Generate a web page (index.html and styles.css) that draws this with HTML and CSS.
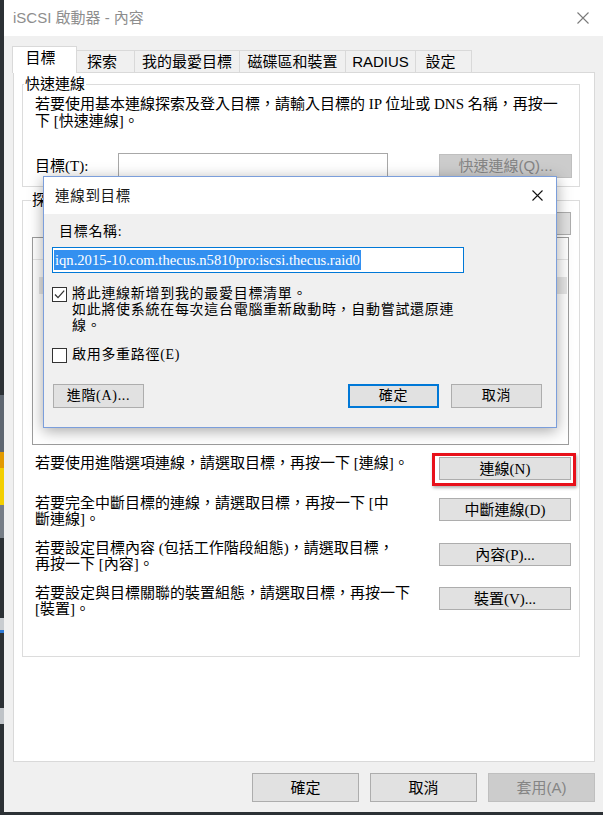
FILE: index.html
```html
<!DOCTYPE html>
<html lang="zh-Hant">
<head>
<meta charset="utf-8">
<title>iSCSI 啟動器 - 內容</title>
<link rel="stylesheet" href="styles.css">
</head>
<body>
<div class="window">
  <div class="titlebar">
    <span class="title">iSCSI 啟動器 - 內容</span>
    <svg class="close" width="12" height="12" viewBox="0 0 12 12"><path d="M0.5 0.5L11.5 11.5M11.5 0.5L0.5 11.5" stroke="#7a7a7a" stroke-width="1.1" fill="none"/></svg>
  </div>
  <div class="client">
    <div class="tabs">
      <div class="tab active">目標</div>
      <div class="tab t2">探索</div>
      <div class="tab t3">我的最愛目標</div>
      <div class="tab t4">磁碟區和裝置</div>
      <div class="tab t5">RADIUS</div>
      <div class="tab t6">設定</div>
    </div>
    <div class="panel">
      <fieldset class="group g-quick">
        <legend>快速連線</legend>
        <p class="desc">若要使用基本連線探索及登入目標，請輸入目標的 IP 位址或 DNS 名稱，再按一<br>下 [快速連線]。</p>
        <div class="quick-row">
          <span class="q-label">目標(T):</span>
          <div class="textbox"></div>
          <button class="btn btn-quick disabled">快速連線(Q)...</button>
        </div>
      </fieldset>
      <fieldset class="group g-disc">
        <legend>探索到的目標(G)</legend>
        <div class="refresh-row"><button class="btn btn-row">重新整理(R)</button></div>
        <div class="listview">
          <div class="lv-head"><span class="lv-col1"></span><span class="lv-col2"></span></div>
          <div class="lv-item"></div>
          <div class="lv-item lv-sel"></div>
        </div>
        <div class="action r1">
          <p class="action-text">若要使用進階選項連線，請選取目標，再按一下 [連線]。</p>
          <button class="btn btn-row highlight">連線(N)</button>
        </div>
        <div class="action r2">
          <p class="action-text">若要完全中斷目標的連線，請選取目標，再按一下 [中<br>斷連線]。</p>
          <button class="btn btn-row">中斷連線(D)</button>
        </div>
        <div class="action r3">
          <p class="action-text">若要設定目標內容 (包括工作階段組態)，請選取目標，<br>再按一下 [內容]。</p>
          <button class="btn btn-row">內容(P)...</button>
        </div>
        <div class="action r4">
          <p class="action-text">若要設定與目標關聯的裝置組態，請選取目標，再按一下<br>[裝置]。</p>
          <button class="btn btn-row">裝置(V)...</button>
        </div>
      </fieldset>
    </div>
    <div class="footer">
      <button class="btn btn-foot">確定</button>
      <button class="btn btn-foot">取消</button>
      <button class="btn btn-foot disabled">套用(A)</button>
    </div>
  </div>

  <div class="dialog">
    <div class="dlg-title">
      <span class="dlg-caption">連線到目標</span>
      <svg width="11" height="11" viewBox="0 0 11 11"><path d="M0.5 0.5L10.5 10.5M10.5 0.5L0.5 10.5" stroke="#111" stroke-width="1.1" fill="none"/></svg>
    </div>
    <div class="dlg-body">
      <div class="dlg-label">目標名稱:</div>
      <div class="dlg-input"><span class="sel">iqn.2015-10.com.thecus.n5810pro:iscsi.thecus.raid0</span></div>
      <div class="check c1">
        <span class="box"><svg width="13" height="13" viewBox="0 0 13 13"><path d="M2 6.5L5 9.6L11.2 2.6" stroke="#333" stroke-width="1.3" fill="none"/></svg></span>
        <span class="check-text">將此連線新增到我的最愛目標清單。<br>如此將使系統在每次這台電腦重新啟動時，自動嘗試還原連<br>線。</span>
      </div>
      <div class="check c2">
        <span class="box"></span>
        <span class="check-text">啟用多重路徑(E)</span>
      </div>
      <div class="dlg-buttons">
        <button class="btn btn-dlg adv">進階(A)...</button>
        <div class="dlg-right">
          <button class="btn btn-dlg default">確定</button>
          <button class="btn btn-dlg">取消</button>
        </div>
      </div>
    </div>
  </div>
</div>
</body>
</html>
```

FILE: styles.css
```css
* { box-sizing: border-box; }
html, body { margin: 0; padding: 0; }
body {
  width: 603px;
  height: 815px;
  overflow: hidden;
  font-family: "Liberation Serif", "Noto Sans CJK TC", serif;
  font-size: 15px;
  color: #000;
  background: linear-gradient(to bottom,
    #2c3135 0, #2c3135 395px,
    #5e6670 395px, #5e6670 452px,
    #e29a00 452px, #e29a00 468px,
    #f3cf00 468px, #f3cf00 505px,
    #767d86 505px, #767d86 538px,
    #2c3135 538px, #2c3135 618px,
    #c8ccd0 618px, #c8ccd0 630px,
    #2f7ad6 630px, #2f7ad6 633px,
    #2c3135 633px, #2c3135 708px,
    #bfc3c7 708px, #bfc3c7 724px,
    #2c3135 724px);
}
.window {
  margin-left: 4px;
  height: 812px;
  background: #f0f0f0;
  position: relative;
}
.titlebar {
  height: 36px;
  background: #fff;
  display: flex;
  align-items: center;
  justify-content: space-between;
  padding: 0 14px 0 9px;
}
.title {
  font-family: "Liberation Sans", "Noto Sans CJK TC", sans-serif;
  font-size: 15px;
  line-height: 20px;
  color: #8e8e8e;
}
.close { display: block; }
.client { padding: 10px 8px 10px 9px; }

.tabs {
  display: flex;
  align-items: flex-end;
  height: 26px;
  padding-left: 1px;
}
.tab {
  height: 22px;
  border: 1px solid #d9d9d9;
  border-bottom: none;
  border-right: none;
  background: #f0f0f0;
  font-family: "Liberation Sans", "Noto Sans CJK TC", sans-serif;
  font-size: 15px;
  line-height: 20px;
  padding-top: 1px;
  text-align: center;
  white-space: nowrap;
}
.tab:last-child { border-right: 1px solid #d9d9d9; }
.tab.active {
  width: 65px;
  height: 27px;
  margin: 0 -2px -1px -2px;
  background: #fff;
  border-right: 1px solid #d9d9d9;
  position: relative;
  z-index: 1;
  padding-right: 8px;
}
.t2 { width: 59px; padding-right: 6px; }
.t3 { width: 105px; }
.t4 { width: 106px; }
.t5 { width: 70px; }
.t6 { width: 57px; padding-right: 6px; }

.panel {
  height: 690px;
  background: #fff;
  border: 1px solid #d9d9d9;
  padding: 0 14px 0 8px;
}
.group {
  margin: 0;
  border: 1px solid #dcdcdc;
  min-width: 0;
}
.group legend {
  font-size: 15px;
  line-height: 16px;
  padding: 0 1px;
}
.g-quick {
  margin-top: 3px;
  padding: 4px 7px 7px 12px;
}
.g-quick legend { margin-left: -11px; }
.desc {
  margin: 0;
  line-height: 17px;
  white-space: nowrap;
}
.quick-row {
  margin-top: 23px;
  display: flex;
  align-items: center;
  height: 26px;
}
.q-label { width: 83px; line-height: 26px; flex: none; }
.textbox {
  width: 270px;
  height: 26px;
  background: #fff;
  border: 1px solid #a8a8a8;
  flex: none;
}

.btn {
  display: block;
  background: #e1e1e1;
  border: 1px solid #adadad;
  color: #000;
  font-family: "Liberation Serif", "Noto Sans CJK TC", serif;
  font-size: 15px;
  line-height: 20px;
  padding: 0;
  margin: 0;
  text-align: center;
  white-space: nowrap;
}
.btn.disabled {
  background: #cccccc;
  border-color: #bfbfbf;
  color: #858585;
  font-family: "Liberation Sans", "Noto Sans CJK TC", sans-serif;
}
.btn-quick { width: 133px; height: 24px; margin-left: auto; }

.g-disc {
  margin-top: 5px;
  padding: 4px 8px 39px 9px;
}
.g-disc legend { margin-left: -1px; }
.refresh-row {
  display: flex;
  justify-content: flex-end;
}
.btn-row { width: 132px; height: 23px; }
.listview {
  margin: 2px 2px 0 0;
  height: 208px;
  border: 1px solid #9c9c9c;
  background: #fff;
  overflow: hidden;
}
.lv-head {
  height: 22px;
  display: flex;
  border-bottom: 1px solid #e5e5e5;
}
.lv-col1 { width: 300px; border-right: 1px solid #e5e5e5; }
.lv-col2 { flex: 1; }
.lv-item { height: 17px; }
.lv-sel { background: #e5e5e5; margin: 0 1px 0 6px; }

.action {
  display: grid;
  grid-template-columns: 1fr 132px;
  align-items: start;
}
.action-text {
  margin: 0;
  padding-left: 3px;
  line-height: 16px;
  white-space: nowrap;
}
.r1 { margin-top: 10px; }
.r1 .btn { margin-top: 2px; }
.r2 { margin-top: 15px; }
.r2 .btn { margin-top: 3px; }
.r3 { margin-top: 13px; }
.r3 .btn { margin-top: 3px; }
.r4 { margin-top: 13px; }
.r4 .btn { margin-top: 2px; }

.highlight { position: relative; }
.highlight::after {
  content: "";
  position: absolute;
  left: -8px;
  right: -6px;
  top: -5px;
  bottom: -7px;
  border: 3px solid #e8101a;
  box-shadow: 1px 2px 3px rgba(0, 0, 0, 0.3);
}

.footer {
  display: flex;
  justify-content: flex-end;
  gap: 11px;
  margin-top: 11px;
}
.btn-foot { width: 107px; height: 29px; }

.dialog {
  position: absolute;
  left: 39px;
  top: 176px;
  width: 514px;
  height: 252px;
  border: 1px solid #7b9edb;
  background: #f0f0f0;
  box-shadow: 0 3px 14px rgba(0, 0, 0, 0.35);
  font-family: "Liberation Serif", "Noto Sans CJK TC", serif;
  font-size: 14px;
  letter-spacing: 0.7px;
  z-index: 5;
}
.dlg-title {
  height: 37px;
  background: #fff;
  display: flex;
  align-items: center;
  justify-content: space-between;
  padding: 0 13px 0 11px;
}
.dlg-caption { font-size: 14.5px; line-height: 20px; color: #1a1a1a; }
.dlg-title svg { display: block; }
.dlg-body { padding: 10px 14px 0 8px; }
.dlg-label { margin-left: 7px; line-height: 16px; }
.dlg-input {
  margin-top: 7px;
  width: 412px;
  height: 26px;
  background: #fff;
  border: 1px solid #0078d7;
  padding: 2px 1px;
}
.sel {
  display: inline-block;
  height: 20px;
  line-height: 20px;
  padding: 0 1px;
  background: #3390f0;
  color: #fff;
  font-family: "Liberation Serif", serif;
  font-size: 14.6px;
  letter-spacing: 0;
}
.check {
  display: flex;
  gap: 5px;
  align-items: flex-start;
}
.c1 { margin-top: 13px; }
.c2 { margin-top: 13px; }
.box {
  width: 15px;
  height: 15px;
  border: 1px solid #333;
  background: #fff;
  flex: none;
  margin-top: 1px;
}
.box svg { display: block; }
.check-text { line-height: 16px; white-space: nowrap; }
.dlg-buttons {
  margin-top: 21px;
  display: flex;
  justify-content: space-between;
}
.dlg-right { display: flex; gap: 12px; }
.btn-dlg { width: 91px; height: 24px; font-size: 14px; letter-spacing: 0.7px; }
.adv { margin-left: 1px; }
.btn-dlg.default {
  border: 2px solid #0078d7;
}
```
